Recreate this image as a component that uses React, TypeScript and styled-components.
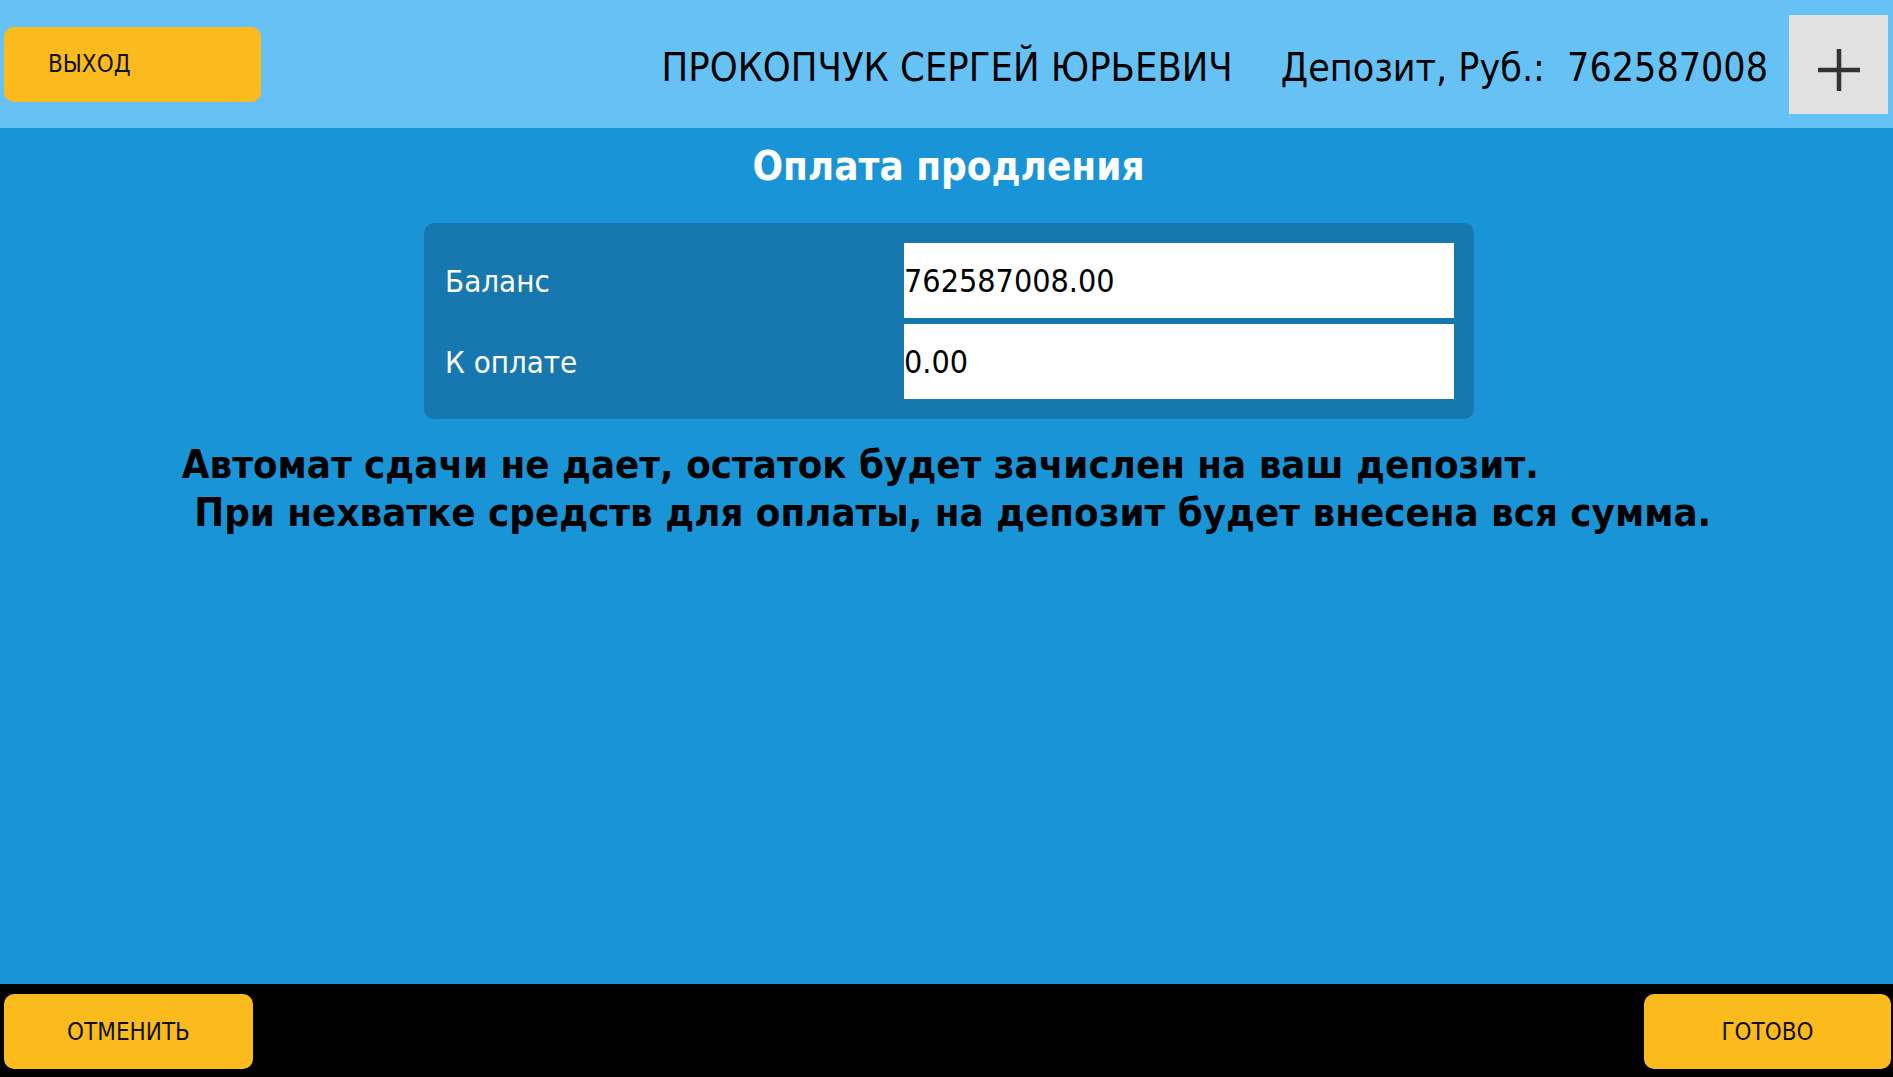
import styled, { createGlobalStyle } from 'styled-components';

const GlobalStyle = createGlobalStyle`
  html, body, #root {
    margin: 0;
    padding: 0;
    height: 100%;
  }

  body {
    font-family: "DejaVu Sans Condensed", "DejaVu Sans", sans-serif;
    background: #1995d7;
  }
`;

const Screen = styled.div`
  height: 100vh;
  display: flex;
  flex-direction: column;
`;

const TopBar = styled.header`
  height: 128px;
  flex-shrink: 0;
  display: flex;
  align-items: center;
  padding: 0 5px 0 4px;
  background: #66c2f5;
  box-sizing: border-box;
`;

const ActionButton = styled.button<{ $width: number; $align?: 'left' | 'center' }>`
  width: ${props => props.$width}px;
  height: 75px;
  border: none;
  border-radius: 10px;
  background: #fbbb1c;
  color: #111;
  font-family: inherit;
  font-size: 24px;
  text-align: ${props => (props.$align === 'left' ? 'left' : 'center')};
  padding: ${props => (props.$align === 'left' ? '0 0 0 44px' : '0')};
  cursor: pointer;
`;

const Spacer = styled.div`
  flex: 1;
`;

const UserName = styled.span`
  font-size: 39.5px;
  color: #000;
  margin-top: 6px;
`;

const Deposit = styled.span`
  font-size: 39px;
  color: #000;
  margin: 6px 21px 0 48px;
  white-space: pre;
`;

const AddButton = styled.button`
  width: 99px;
  height: 99px;
  border: none;
  background: #e1e1e1;
  display: flex;
  align-items: center;
  justify-content: center;
  padding: 12px 0 0;
  cursor: pointer;
`;

const Content = styled.main`
  flex: 1;
  display: flex;
  flex-direction: column;
  align-items: center;
  padding-top: 8px;
`;

const Title = styled.h1`
  margin: 0 0 0 4px;
  height: 60px;
  line-height: 60px;
  font-size: 40px;
  font-weight: 700;
  color: #fff;
`;

const Panel = styled.div`
  margin: 27px 0 0 5px;
  width: 1050px;
  box-sizing: border-box;
  padding: 20px;
  border-radius: 10px;
  background: #1778af;
  display: grid;
  grid-template-columns: 460px 550px;
  grid-auto-rows: 75px;
  row-gap: 6px;
`;

const FieldLabel = styled.div`
  display: flex;
  align-items: center;
  padding-left: 1px;
  font-size: 31px;
  color: #fff;
`;

const FieldValue = styled.div`
  display: flex;
  align-items: center;
  background: #fff;
  font-size: 32px;
  color: #000;
`;

const Notice = styled.p`
  margin: 21px 0 0;
  width: max-content;
  font-size: 39.8px;
  font-weight: 700;
  line-height: 48px;
  color: #000;
  white-space: pre;
`;

const BottomBar = styled.footer`
  height: 93px;
  flex-shrink: 0;
  display: flex;
  justify-content: space-between;
  align-items: flex-start;
  padding: 10px 2px 0 4px;
  background: #000;
  box-sizing: border-box;
`;

const PlusIcon = () => (
  <svg width="44" height="44" viewBox="0 0 44 44">
    <path d="M22 1 V43 M1 22 H43" stroke="#333" strokeWidth="4.5" fill="none" />
  </svg>
);

const fields = [
  { label: 'Баланс', value: '762587008.00' },
  { label: 'К оплате', value: '0.00' },
];

export default function App() {
  return (
    <>
      <GlobalStyle />
      <Screen>
        <TopBar>
          <ActionButton $width={257} $align="left">ВЫХОД</ActionButton>
          <Spacer />
          <UserName>ПРОКОПЧУК СЕРГЕЙ ЮРЬЕВИЧ</UserName>
          <Deposit>Депозит, Руб.:  762587008</Deposit>
          <AddButton>
            <PlusIcon />
          </AddButton>
        </TopBar>

        <Content>
          <Title>Оплата продления</Title>
          <Panel>
            {fields.map(f => (
              <>
                <FieldLabel key={f.label + '-l'}>{f.label}</FieldLabel>
                <FieldValue key={f.label + '-v'}>{f.value}</FieldValue>
              </>
            ))}
          </Panel>
          <Notice>
            {'Автомат сдачи не дает, остаток будет зачислен на ваш депозит.\n При нехватке средств для оплаты, на депозит будет внесена вся сумма.'}
          </Notice>
        </Content>

        <BottomBar>
          <ActionButton $width={249}>ОТМЕНИТЬ</ActionButton>
          <ActionButton $width={247}>ГОТОВО</ActionButton>
        </BottomBar>
      </Screen>
    </>
  );
}
